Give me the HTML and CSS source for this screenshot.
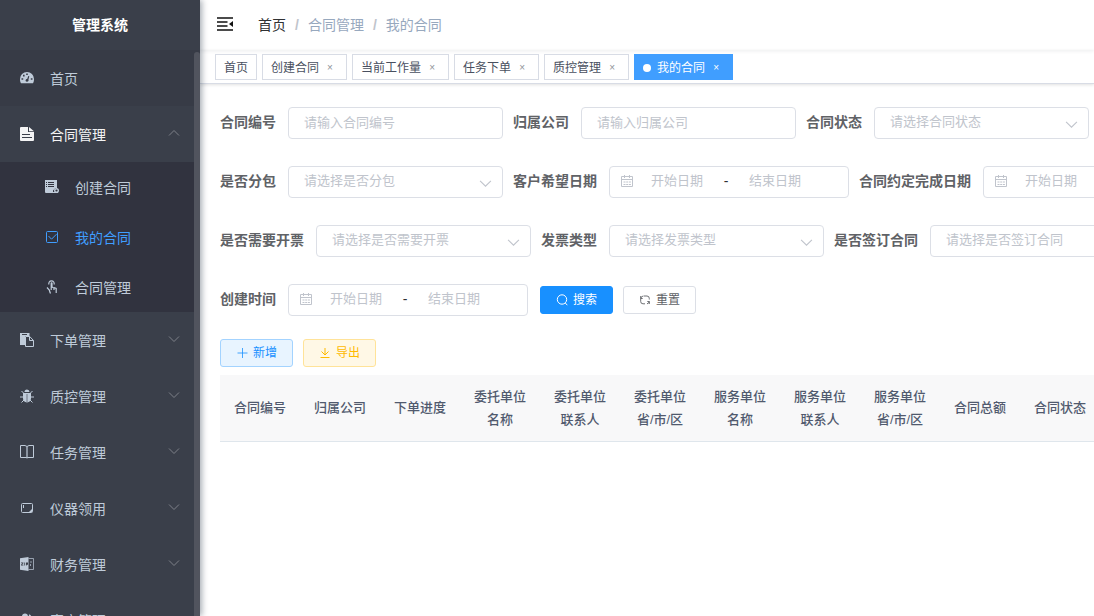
FILE: index.html
```html
<!DOCTYPE html>
<html lang="zh-CN">
<head>
<meta charset="utf-8">
<title>管理系统</title>
<link rel="stylesheet" href="styles.css">
</head>
<body>
<svg class="sprite" aria-hidden="true">
  <symbol id="down" viewBox="0 0 12 12"><path d="M1 3.500 6 8.500 11 3.500" fill="none" stroke="currentColor"/></symbol>
  <symbol id="cal" viewBox="0 0 14 14"><path d="M1.500 2.500h11v10h-11zM1.500 5.500h11M4.500 1v3M9.500 1v3M3.500 8h2M6.200 8h2M8.900 8h2M3.500 10.500h2M6.200 10.500h2M8.900 10.500h2" fill="none" stroke="currentColor"/></symbol>
</svg>
<div class="app">
  <aside class="sidebar">
    <h1 class="logo">管理系统</h1>
    <nav class="menu">
      <a class="item item-home" href="#"><svg class="icon" viewBox="0 0 14 14"><path fill="currentColor" fill-rule="evenodd" d="M7 1a7 7 0 0 0-7 7c0 1.700.2 3.100 1 4.200h12C13.800 11.100 14 9.700 14 8a7 7 0 0 0-7-7zM6.200 2.500h1.600v1.600H6.200zM3 3.800h1.600v1.600H3zM1.500 7.200h1.700v1.600H1.500zM10.800 7.200h1.700v1.600h-1.700zM8.300 5l1 .3-.9 3.500c.5.900 0 2-1.400 2s-1.900-1.500-1-2.300c.3-.3.700-.4 1.200-.4z"/></svg><span>首页</span></a>
      <button class="item item-open" type="button"><svg class="icon" viewBox="0 0 14 14"><path fill="currentColor" fill-rule="evenodd" d="M1 0h7v5h6v8q0 1-1 1H1q-1 0-1-1V1q0-1 1-1zM9 0l5 4.200H9zM2 7v1h8V7zM2 10v1h10v-1z"/></svg><span>合同管理</span><svg class="caret caret-up"><use href="#down"/></svg></button>
      <div class="submenu">
        <a class="subitem" href="#"><svg class="icon" viewBox="0 0 14 14"><path fill="currentColor" fill-rule="evenodd" d="M0 0h12v8h-1.500L8 10.500V13H1q-1 0-1-1zM1 2v1h1V2zM3 2v1h6V2zM1 4v1h1V4zM3 4v1h6V4zM1 6v1h1V6zM3 6v1h6V6z"/><circle cx="11.500" cy="10.500" r="1.800" fill="none" stroke="currentColor" stroke-width="1.400"/><path d="M7 12.500h6" stroke="currentColor"/></svg><span>创建合同</span></a>
        <a class="subitem subitem-active" href="#" aria-current="page"><svg class="icon" viewBox="0 0 14 14"><rect x="1.500" y="1.500" width="11" height="11" rx="1" fill="none" stroke="currentColor"/><path d="m3.500 6 3 3.200 5-5" fill="none" stroke="currentColor"/></svg><span>我的合同</span></a>
        <a class="subitem" href="#"><svg class="icon" viewBox="0 0 14 14"><path d="M4 4.500a2.700 2.700 0 1 1 5 0M6.200 10V3.500q0-1 .8-.5v4.500M2 7.500l2.300 2.500q.5 2 1.200 3.500M7 7l2 1v2M9 7.500l2.200 1v4.500" fill="none" stroke="currentColor" stroke-width="1.200"/></svg><span>合同管理</span></a>
      </div>
      <button class="item" type="button"><svg class="icon" viewBox="0 0 14 14"><path fill="currentColor" d="M0 0h9.500v3H5v9H0z"/><path d="M2 1.500h5" stroke="#3a3f4a"/><path d="M5.500 3.500h4.200l3.800 4v6h-8zM9.500 3.500v4h4" fill="none" stroke="currentColor"/></svg><span>下单管理</span><svg class="caret"><use href="#down"/></svg></button>
      <button class="item" type="button"><svg class="icon" viewBox="0 0 14 14"><path fill="currentColor" d="M4.500 3a2.500 2.500 0 0 1 5 0zM3 4h8v5.500c0 2-1.500 3.800-4 4-2.500-.2-4-2-4-4z"/><path d="M7 5v8" stroke="#3a3f4a" opacity=".6"/><path d="M1.500 2 4 4.500M12.500 2 10 4.500M0 8h3.500M10.500 8H14M1.500 13.500 4 11M12.500 13.500 10 11" stroke="currentColor"/></svg><span>质控管理</span><svg class="caret"><use href="#down"/></svg></button>
      <button class="item" type="button"><svg class="icon" viewBox="0 0 14 14"><path d="M.5.500H5l2 1 2-1h4.500v12H8l-1 .5-1-.5H.5z" fill="none" stroke="currentColor"/><path d="M7 1.500v11.500" stroke="currentColor" stroke-width="2" opacity=".6"/></svg><span>任务管理</span><svg class="caret"><use href="#down"/></svg></button>
      <button class="item" type="button"><svg class="icon" viewBox="0 0 14 14"><rect x="1.500" y="2.500" width="11" height="9" rx="1" fill="none" stroke="currentColor"/><path d="M3.500 4v3" stroke="currentColor"/><path d="M12 8v3H9z" fill="currentColor"/></svg><span>仪器领用</span><svg class="caret"><use href="#down"/></svg></button>
      <button class="item" type="button"><svg class="icon" viewBox="0 0 14 14"><path fill="currentColor" fill-rule="evenodd" d="M0 1.200 8.500 0v14L0 12.800zM1 5.500v.7h1.500L1 7.700v.8h2.400v-.7H2.100l1.300-1.500v-.8zM4.300 5.500v3h.8v-3zM6 5.500v3h.7V7.800H8V5.500z"/><path d="M8.500 1.500h5v11h-5M11 4v2M10.500 7v2" fill="none" stroke="currentColor" opacity=".7"/></svg><span>财务管理</span><svg class="caret"><use href="#down"/></svg></button>
      <button class="item" type="button"><svg class="icon" viewBox="0 0 14 14"><circle cx="5" cy="3.500" r="3" fill="currentColor"/><path fill="currentColor" d="M0 13c0-7 10-7 10 0zM9 1.500c3 0 3 4.500.5 4.500C13 7 14 9 14 12h-3c0-3-1-4-2.500-5.500z"/></svg><span>客户管理</span><svg class="caret"><use href="#down"/></svg></button>
    </nav>
    <div class="scrollbar"></div>
  </aside>
  <main class="main">
    <header class="navbar">
      <button class="fold" type="button" aria-label="收起菜单"><svg viewBox="0 0 16 14" width="16" height="14"><path d="M0 1h16M0 5h10.500M0 9h10.500M0 13h16" stroke="#111" stroke-width="1.600"/><path d="M16 4v6l-4-3z" fill="#111"/></svg></button>
      <nav class="crumbs"><a class="crumb-home" href="#">首页</a><b>/</b><span>合同管理</span><b>/</b><span>我的合同</span></nav>
    </header>
    <nav class="tags">
      <a class="tag" href="#">首页</a>
      <a class="tag" href="#">创建合同<i class="close">×</i></a>
      <a class="tag" href="#">当前工作量<i class="close">×</i></a>
      <a class="tag" href="#">任务下单<i class="close">×</i></a>
      <a class="tag" href="#">质控管理<i class="close">×</i></a>
      <a class="tag tag-active" href="#"><i class="dot"></i>我的合同<i class="close">×</i></a>
    </nav>
    <section class="content">
      <form class="filters">
        <div class="row">
          <div class="field"><label for="code">合同编号</label><input class="control" id="code" placeholder="请输入合同编号"></div>
          <div class="field"><label for="company">归属公司</label><input class="control" id="company" placeholder="请输入归属公司"></div>
          <div class="field"><label for="state">合同状态</label><div class="pick"><select class="control" id="state"><option>请选择合同状态</option></select><svg class="arrow"><use href="#down"/></svg></div></div>
        </div>
        <div class="row">
          <div class="field"><label for="sub">是否分包</label><div class="pick"><select class="control" id="sub"><option>请选择是否分包</option></select><svg class="arrow"><use href="#down"/></svg></div></div>
          <div class="field"><label for="hope">客户希望日期</label><div class="range"><svg class="cal"><use href="#cal"/></svg><input id="hope" placeholder="开始日期"><span>-</span><input aria-label="客户希望结束日期" placeholder="结束日期"></div></div>
          <div class="field"><label for="due">合同约定完成日期</label><div class="range"><svg class="cal"><use href="#cal"/></svg><input id="due" placeholder="开始日期"><span>-</span><input aria-label="约定完成结束日期" placeholder="结束日期"></div></div>
        </div>
        <div class="row">
          <div class="field"><label for="bill">是否需要开票</label><div class="pick"><select class="control" id="bill"><option>请选择是否需要开票</option></select><svg class="arrow"><use href="#down"/></svg></div></div>
          <div class="field"><label for="kind">发票类型</label><div class="pick"><select class="control" id="kind"><option>请选择发票类型</option></select><svg class="arrow"><use href="#down"/></svg></div></div>
          <div class="field"><label for="sign">是否签订合同</label><div class="pick"><select class="control" id="sign"><option>请选择是否签订合同</option></select><svg class="arrow"><use href="#down"/></svg></div></div>
        </div>
        <div class="row">
          <div class="field"><label for="made">创建时间</label><div class="range"><svg class="cal"><use href="#cal"/></svg><input id="made" placeholder="开始日期"><span>-</span><input aria-label="创建结束日期" placeholder="结束日期"></div></div>
          <div class="buttons">
            <button class="btn btn-primary" type="button"><svg viewBox="0 0 12 12"><circle cx="6" cy="5.500" r="4.700" fill="none" stroke="currentColor"/><path d="m9.300 9 2 2.200" stroke="currentColor"/></svg>搜索</button>
            <button class="btn" type="reset"><svg viewBox="0 0 12 12"><path d="M4.500 2H8q2.300 0 2.300 2.500v1M1.700 4.500V7.500q0 2.300 2.300 2.300h2M1.700 2v2.500h2M10.300 10V7.500h-2M10.300 7.500q-.3 2-2.300 2.300M1.700 4.500q.3-2 2.300-2.400" fill="none" stroke="currentColor" stroke-width=".9"/></svg>重置</button>
          </div>
        </div>
      </form>
      <div class="buttons toolbar">
        <button class="btn btn-add" type="button"><svg viewBox="0 0 12 12"><path d="M6.500 1v10M1.500 6h10" stroke="currentColor" stroke-width=".8"/></svg>新增</button>
        <button class="btn btn-export" type="button"><svg viewBox="0 0 12 12"><path d="M6 1v7M2.500 4.500 6 8 9.500 4.500M1.500 10.500h9" fill="none" stroke="currentColor"/></svg>导出</button>
      </div>
      <table class="table">
        <thead><tr><th>合同编号</th><th>归属公司</th><th>下单进度</th><th>委托单位<br>名称</th><th>委托单位<br>联系人</th><th>委托单位<br>省/市/区</th><th>服务单位<br>名称</th><th>服务单位<br>联系人</th><th>服务单位<br>省/市/区</th><th>合同总额</th><th>合同状态</th></tr></thead>
      </table>
    </section>
  </main>
</div>
</body>
</html>
```
FILE: styles.css
```css
* { box-sizing: border-box; }
body { margin: 0; background: #fff; color: #606266; font: 14px/20px "Liberation Sans", "Noto Sans CJK SC", sans-serif; }
button, input, select { font: inherit; color: inherit; }
button { cursor: pointer; }
a { color: inherit; text-decoration: none; }
i { font-style: normal; }
.sprite { position: absolute; width: 0; height: 0; }
.app { display: flex; height: 100vh; overflow: hidden; }

.sidebar { position: relative; z-index: 2; flex: none; width: 200px; background: #3a3f4a; box-shadow: 2px 0 6px rgba(0, 21, 41, .35); color: #bfcbd9; }
.logo { margin: 0; font-size: 14px; line-height: 50px; text-align: center; color: #fff; }
.item, .subitem { display: flex; align-items: center; width: 100%; border: 0; background: none; text-align: left; }
.item { height: 56px; padding: 0 20px; }
.item span, .subitem span { padding-top: 2px; }
.item-home { background: #373b46; }
.item-open { color: #f4f4f5; }
.icon { flex: none; width: 14px; height: 14px; margin-right: 16px; }
.submenu { background: #31333f; }
.subitem { height: 50px; padding: 0 45px; }
.subitem-active { color: #409eff; }
.caret { width: 12px; height: 12px; margin: 0 0 2px auto; color: #909399; opacity: .8; }
.caret-up { transform: rotate(180deg); }
.scrollbar { position: absolute; top: 52px; right: 0; bottom: 0; width: 6px; border-radius: 3px 3px 0 0; background: #51545e; }

.main { flex: 1; min-width: 0; overflow: hidden; }
.navbar { display: flex; align-items: center; height: 50px; padding: 0 17px; box-shadow: 0 1px 4px rgba(0, 21, 41, .08); }
.fold { display: flex; padding: 0 0 2px; border: 0; background: none; }
.crumbs { display: flex; gap: 9px; margin-left: 25px; color: #97a8be; }
.crumb-home { color: #303133; }
.crumbs b { color: #c0c4cc; }
.tags { display: flex; gap: 5px; height: 34px; padding: 4px 15px; border-bottom: 1px solid #d8dce5; box-shadow: 0 1px 3px rgba(0, 0, 0, .12); }
.tag { display: flex; flex: none; align-items: center; height: 26px; padding: 2px 8px 0; border: 1px solid #d8dce5; color: #495060; font-size: 12px; }
.close { width: 16px; margin-left: 3px; color: #909399; font-size: 10px; text-align: center; }
.dot { width: 8px; height: 8px; margin-right: 6px; border-radius: 50%; background: #fff; }
.tag-active { border-color: #409eff; background: #409eff; color: #fff; }
.tag-active .close { color: #fff; }

.content { padding: 23px 20px; }
.filters { display: grid; gap: 27px; }
.row { display: flex; align-items: center; gap: 10px; }
.field { display: flex; flex: none; align-items: center; gap: 12px; }
.field label { padding-bottom: 2px; font-weight: 700; }
.control { width: 215px; height: 32px; padding: 0 15px 2px; border: 1px solid #dcdfe6; border-radius: 4px; background: #fff; font-size: 13px; }
select.control { display: block; appearance: none; color: #c0c4cc; }
::placeholder { color: #c0c4cc; opacity: 1; }
.pick { position: relative; }
.arrow { position: absolute; top: 11px; right: 11px; width: 13px; height: 13px; color: #c0c4cc; pointer-events: none; }
.range { display: flex; align-items: center; width: 240px; height: 32px; padding: 0 10px 2px; border: 1px solid #dcdfe6; border-radius: 4px; color: #303133; }
.range input { width: 84px; min-width: 0; padding: 0 0 0 2px; border: 0; background: none; text-align: center; font-size: 13px; }
.range span { width: 14px; padding-left: 2px; text-align: center; }
.cal { flex: none; width: 14px; height: 14px; color: #c0c4cc; }

.buttons { display: flex; gap: 10px; }
.row .buttons { padding: 0 2px; }
.toolbar { margin-top: 23px; }
.btn { display: flex; align-items: center; gap: 5px; height: 28px; padding: 0 15px; border: 1px solid #dcdfe6; border-radius: 3px; background: #fff; font-size: 12px; }
.btn svg { width: 12px; height: 12px; }
.btn-primary { border-color: #1890ff; background: #1890ff; color: #fff; }
.btn-add { border-color: #a3d3ff; background: #e8f4ff; color: #1890ff; }
.btn-export { border-color: #ffe399; background: #fff8e6; color: #ffba00; }
.table { width: 100%; min-width: 880px; margin-top: 8px; border-spacing: 0; table-layout: fixed; }
.table th { height: 67px; padding: 0 0 1px; border-bottom: 1px solid #dfe6ec; background: #f8f8f9; color: #515a6e; font-size: 13px; font-weight: 500; line-height: 23px; }
```
